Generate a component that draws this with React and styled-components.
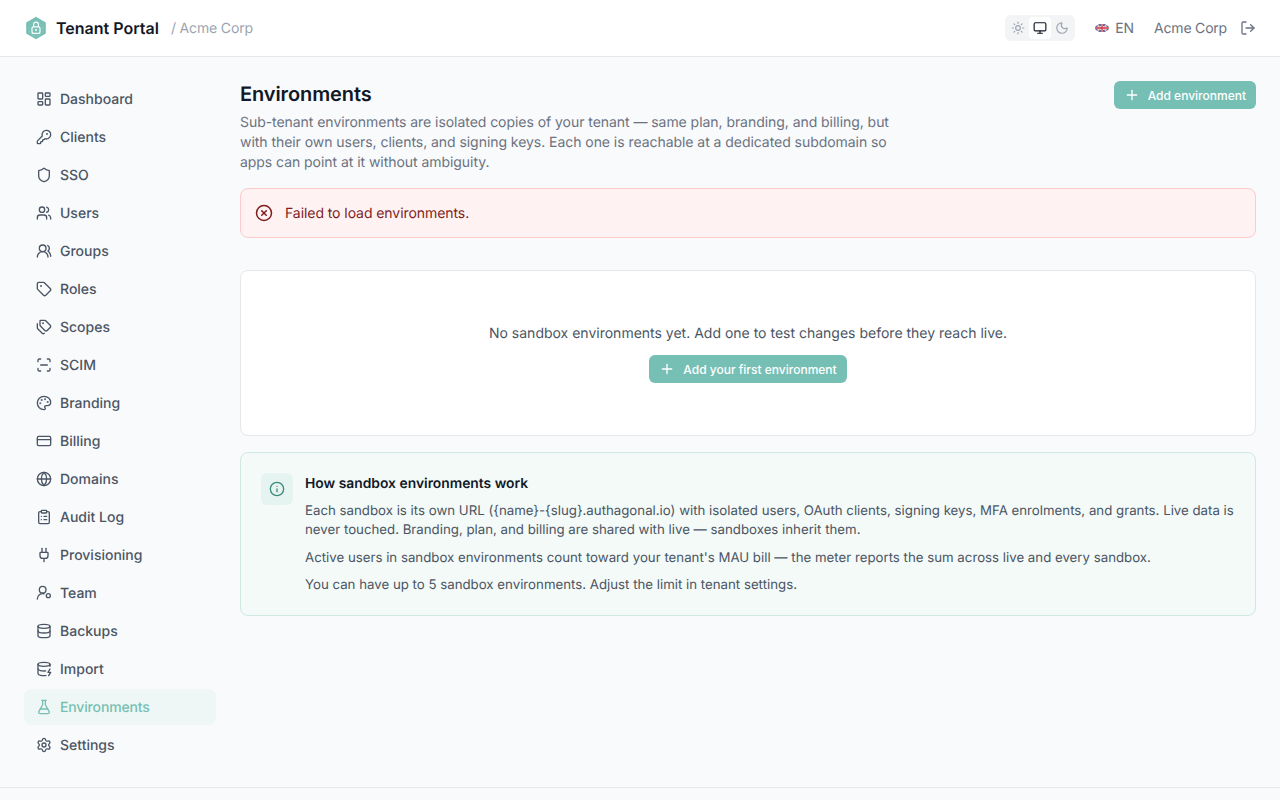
import styled, { createGlobalStyle } from 'styled-components';
import {
  LayoutDashboard,
  KeyRound,
  Shield,
  Users,
  UsersRound,
  Tag,
  Tags,
  ScanLine,
  Palette,
  CreditCard,
  Globe,
  ClipboardList,
  Plug,
  Database,
  DatabaseZap,
  FlaskConical,
  Settings,
  Sun,
  Monitor,
  Moon,
  LogOut,
  Plus,
  CircleX,
  Info,
} from 'lucide-react';

// lucide has no plain person + dot, so this one is drawn by hand
function TeamIcon(props) {
  return (
    <svg
      width="16"
      height="16"
      viewBox="0 0 24 24"
      fill="none"
      stroke="currentColor"
      strokeWidth="2"
      strokeLinecap="round"
      strokeLinejoin="round"
      {...props}
    >
      <circle cx="10" cy="7" r="5" />
      <path d="M2 21a8 8 0 0 1 10-7.7" />
      <circle cx="18.5" cy="16" r="3" />
    </svg>
  );
}

function Logo() {
  return (
    <svg width="24" height="24" viewBox="0 0 24 24" fill="none">
      <path d="M12 .8 21.8 6.4v11.2L12 23.2 2.2 17.6V6.4z" fill="#76bfb4" />
      <circle cx="12" cy="13" r="7" stroke="#a9d8d0" strokeWidth="0.8" strokeDasharray="1 1.4" />
      <rect x="8" y="10.8" width="8" height="6.6" rx="1.4" stroke="#fff" strokeWidth="1.2" />
      <path d="M9.6 10.8V8.6a2.4 2.4 0 0 1 4.8 0v2.2" stroke="#fff" strokeWidth="1.2" />
      <circle cx="12" cy="14" r="1" fill="#fff" />
    </svg>
  );
}

function FlagUk() {
  return (
    <svg width="14" height="10" viewBox="0 0 14 10">
      <clipPath id="flag-clip">
        <ellipse cx="7" cy="5" rx="7" ry="4" />
      </clipPath>
      <g clipPath="url(#flag-clip)">
        <rect width="14" height="10" fill="#2b3a80" />
        <path d="M0 1 14 9M14 1 0 9" stroke="#fff" strokeWidth="1.6" />
        <path d="M0 1 14 9M14 1 0 9" stroke="#c8313e" strokeWidth="0.6" />
        <path d="M7 0v10M0 5h14" stroke="#fff" strokeWidth="2.4" />
        <path d="M7 0v10M0 5h14" stroke="#c8313e" strokeWidth="1.3" />
      </g>
    </svg>
  );
}

const navItems = [
  { label: 'Dashboard', icon: LayoutDashboard },
  { label: 'Clients', icon: KeyRound },
  { label: 'SSO', icon: Shield },
  { label: 'Users', icon: Users },
  { label: 'Groups', icon: UsersRound },
  { label: 'Roles', icon: Tag },
  { label: 'Scopes', icon: Tags },
  { label: 'SCIM', icon: ScanLine },
  { label: 'Branding', icon: Palette },
  { label: 'Billing', icon: CreditCard },
  { label: 'Domains', icon: Globe },
  { label: 'Audit Log', icon: ClipboardList },
  { label: 'Provisioning', icon: Plug },
  { label: 'Team', icon: TeamIcon },
  { label: 'Backups', icon: Database },
  { label: 'Import', icon: DatabaseZap },
  { label: 'Environments', icon: FlaskConical, active: true },
  { label: 'Settings', icon: Settings },
];

const sandboxIntro =
  "Each sandbox is its own URL ({name}-{slug}.authagonal.io) with isolated users, OAuth clients, signing keys, MFA enrolments, and grants. Live data is never touched. Branding, plan, and billing are shared with live — sandboxes inherit them.";

function App() {
  return (
    <>
      <GlobalStyle />
      <SPage>
        <SHeader>
          <SBrand>
            <Logo />
            <SBrandName>Tenant Portal</SBrandName>
            <SBrandTenant>/ Acme Corp</SBrandTenant>
          </SBrand>
          <SHeaderRight>
            <SThemeSwitch>
              <SThemeButton>
                <Sun size={14} />
              </SThemeButton>
              <SThemeButton $selected>
                <Monitor size={14} />
              </SThemeButton>
              <SThemeButton>
                <Moon size={14} />
              </SThemeButton>
            </SThemeSwitch>
            <SLang>
              <FlagUk />
              EN
            </SLang>
            <STenant>Acme Corp</STenant>
            <SLogout>
              <LogOut size={16} />
            </SLogout>
          </SHeaderRight>
        </SHeader>
        <SBody>
          <SSidebar>
            {navItems.map(({ label, icon: Icon, active }) => (
              <SNavItem key={label} $active={active}>
                <Icon size={16} />
                {label}
              </SNavItem>
            ))}
          </SSidebar>
          <SMain>
            <STitleRow>
              <div>
                <STitle>Environments</STitle>
                <SLead>
                  Sub-tenant environments are isolated copies of your tenant — same plan, branding,
                  and billing, but with their own users, clients, and signing keys. Each one is
                  reachable at a dedicated subdomain so apps can point at it without ambiguity.
                </SLead>
              </div>
              <SButton>
                <Plus size={16} />
                Add environment
              </SButton>
            </STitleRow>
            <SAlert>
              <CircleX size={18} />
              Failed to load environments.
            </SAlert>
            <SEmptyCard>
              <SEmptyText>No sandbox environments yet. Add one to test changes before they reach live.</SEmptyText>
              <SButton>
                <Plus size={16} />
                Add your first environment
              </SButton>
            </SEmptyCard>
            <SInfoCard>
              <SInfoIcon>
                <Info size={16} />
              </SInfoIcon>
              <SInfoBody>
                <SInfoTitle>How sandbox environments work</SInfoTitle>
                <SInfoText>{sandboxIntro}</SInfoText>
                <SInfoText>
                  Active users in sandbox environments count toward your tenant's MAU bill — the meter
                  reports the sum across live and every sandbox.
                </SInfoText>
                <SInfoText>You can have up to 5 sandbox environments. Adjust the limit in tenant settings.</SInfoText>
              </SInfoBody>
            </SInfoCard>
          </SMain>
        </SBody>
        <SFooter />
      </SPage>
    </>
  );
}

const GlobalStyle = createGlobalStyle`
  body {
    margin: 0;
    background: #f8fafc;
    font-family: Inter, "Liberation Sans", sans-serif;
    color: #111827;
    text-rendering: geometricPrecision;
  }
`;

const SPage = styled.div`
  display: flex;
  flex-direction: column;
  height: 800px;
  overflow: hidden;
`;

const SHeader = styled.header`
  display: flex;
  align-items: center;
  justify-content: space-between;
  height: 56px;
  padding: 0 24px;
  background: #fff;
  border-bottom: 1px solid #e2e8ec;
  flex-shrink: 0;
`;

const SBrand = styled.div`
  display: flex;
  align-items: center;
`;

const SBrandName = styled.span`
  margin-left: 8px;
  font-size: 16px;
  font-weight: 600;
  color: #111827;
`;

const SBrandTenant = styled.span`
  margin-left: 12px;
  font-size: 14px;
  letter-spacing: -0.15px;
  color: #9ca3af;
`;

const SHeaderRight = styled.div`
  display: flex;
  align-items: center;
`;

const SThemeSwitch = styled.div`
  display: flex;
  padding: 2px;
  background: #f3f4f6;
  border-radius: 6px;
`;

const SThemeButton = styled.span`
  display: flex;
  align-items: center;
  justify-content: center;
  width: 22px;
  height: 22px;
  border-radius: 4px;
  color: ${(p) => (p.$selected ? '#111827' : '#9ca3af')};
  background: ${(p) => (p.$selected ? '#fff' : 'transparent')};
`;

const SLang = styled.div`
  display: flex;
  align-items: center;
  gap: 6px;
  margin-left: 20px;
  font-size: 14px;
  color: #6b7280;
`;

const STenant = styled.span`
  margin-left: 20px;
  font-size: 14px;
  letter-spacing: -0.2px;
  color: #6b7280;
`;

const SLogout = styled.span`
  display: flex;
  margin-left: 13px;
  color: #6b7280;
`;

const SBody = styled.div`
  display: flex;
  flex: 1;
  min-height: 0;
`;

const SSidebar = styled.nav`
  display: flex;
  flex-direction: column;
  gap: 2px;
  width: 192px;
  padding: 24px 0 0 24px;
  flex-shrink: 0;
`;

const SNavItem = styled.a`
  display: flex;
  align-items: center;
  gap: 8px;
  height: 36px;
  padding: 0 12px;
  border-radius: 8px;
  font-size: 14px;
  font-weight: 500;
  letter-spacing: ${(p) => (p.$active ? '-0.15px' : 'normal')};
  color: ${(p) => (p.$active ? '#76bfb4' : '#4b5563')};
  background: ${(p) => (p.$active ? '#eef7f5' : 'transparent')};
  svg {
    flex-shrink: 0;
  }
`;

const SMain = styled.main`
  flex: 1;
  min-width: 0;
  padding: 24px 24px 0;
`;

const STitleRow = styled.div`
  display: flex;
  align-items: flex-start;
  justify-content: space-between;
  margin-bottom: 15px;
`;

const STitle = styled.h1`
  margin: 0 0 6px;
  font-size: 20px;
  line-height: 26px;
  letter-spacing: -0.1px;
  font-weight: 600;
  color: #111827;
`;

const SLead = styled.p`
  margin: 0;
  max-width: 672px;
  font-size: 14px;
  line-height: 20px;
  letter-spacing: -0.05px;
  color: #6b7280;
`;

const SButton = styled.button`
  display: inline-flex;
  align-items: center;
  gap: 8px;
  height: 28px;
  padding: 0 10px;
  border: 0;
  border-radius: 6px;
  background: #76bfb4;
  color: #fff;
  font-family: inherit;
  font-size: 12px;
  font-weight: 500;
  flex-shrink: 0;
`;

const SAlert = styled.div`
  display: flex;
  align-items: center;
  gap: 12px;
  height: 48px;
  padding: 0 14px;
  background: #fef2f2;
  border: 1px solid #fecaca;
  border-radius: 8px;
  font-size: 14px;
  letter-spacing: -0.07px;
  color: #7f1d1d;
`;

const SEmptyCard = styled.section`
  display: flex;
  flex-direction: column;
  align-items: center;
  justify-content: center;
  gap: 10px;
  height: 164px;
  margin-top: 32px;
  background: #fff;
  border: 1px solid #e5e7eb;
  border-radius: 8px;
`;

const SEmptyText = styled.p`
  margin: 0;
  font-size: 14px;
  line-height: 22px;
  color: #4b5563;
`;

const SInfoCard = styled.section`
  display: flex;
  gap: 12px;
  margin-top: 16px;
  padding: 20px 20px 19.5px;
  background: #f3faf8;
  border: 1px solid #cfe8e3;
  border-radius: 8px;
`;

const SInfoIcon = styled.div`
  display: flex;
  align-items: center;
  justify-content: center;
  width: 32px;
  height: 32px;
  border-radius: 6px;
  background: #e6f4f1;
  color: #3d8a7d;
  flex-shrink: 0;
`;

const SInfoBody = styled.div`
  min-width: 0;
`;

const SInfoTitle = styled.h3`
  margin: 0 0 6.5px;
  font-size: 13.85px;
  line-height: 22px;
  font-weight: 600;
  color: #111827;
`;

const SInfoText = styled.p`
  margin: 0 0 8px;
  font-size: 13.25px;
  line-height: 19.5px;
  color: #4b5563;
  &:last-child {
    margin-bottom: 0;
  }
`;

const SFooter = styled.footer`
  height: 12px;
  border-top: 1px solid #e2e8ec;
  flex-shrink: 0;
`;

export default App;
